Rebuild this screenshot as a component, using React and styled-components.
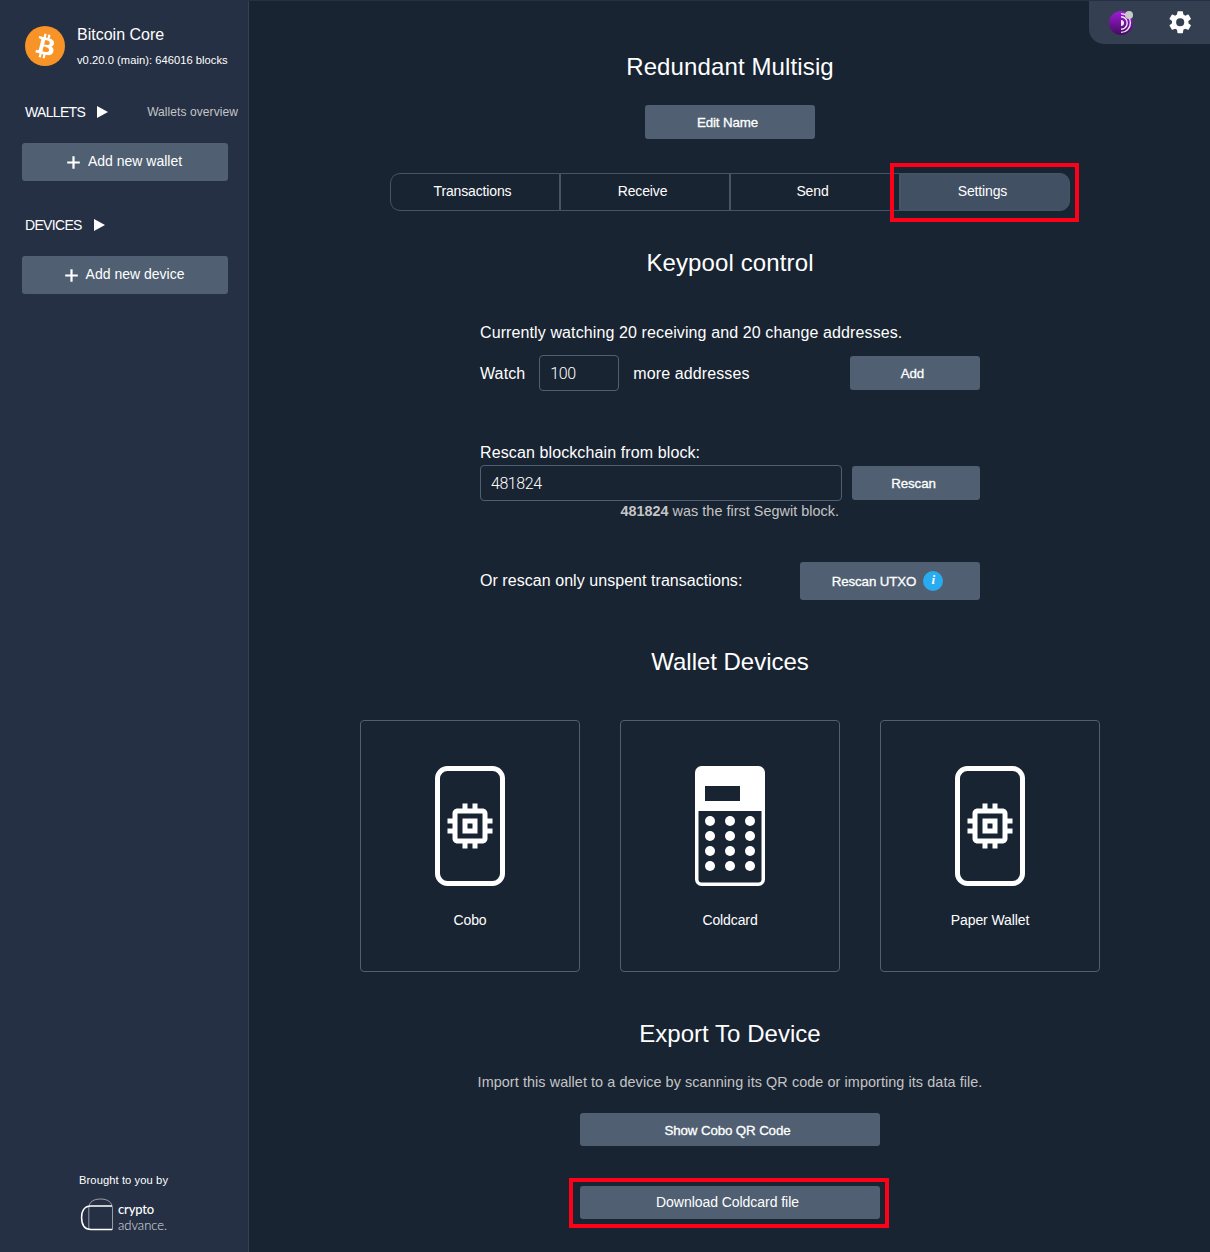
import React from "react";
import styled, { createGlobalStyle, css } from "styled-components";

const color = {
  page: "#192432",
  side: "#263044",
  button: "#506072",
  line: "#445567",
  active: "#425064",
  muted: "#c4c5c7",
  mark: "#ff0019",
};

const GlobalStyle = createGlobalStyle`
  *, *::before, *::after { box-sizing: border-box; }
  body {
    margin: 0;
    background: ${color.page};
    color: #fff;
    font-family: "Liberation Sans", Arial, sans-serif;
    font-size: 16px;
  }
  button, input { font-family: inherit; color: inherit; }
`;

const Layout = styled.div`
  position: relative;
  display: flex;
  height: 1252px;
  border-top: 1px solid ${color.side};
  overflow: hidden;
`;

const Sidebar = styled.aside`
  display: flex;
  flex-direction: column;
  flex: none;
  width: 249px;
  margin-right: 1px;
  padding: 25px 0 20px;
  background: ${color.side};
  border-right: 1px solid #344154;
`;

const NodeInfo = styled.div`
  display: flex;
  align-items: flex-start;
  gap: 12px;
  height: 60px;
  padding-left: 25px;
  svg { flex: none; }
`;

const NodeName = styled.div`
  line-height: 18px;
`;

const NodeStatus = styled.div`
  margin-top: 9px;
  font-size: 11.2px;
  line-height: 14px;
  letter-spacing: 0.03px;
  white-space: nowrap;
`;

const SectionHead = styled.div`
  display: flex;
  align-items: center;
  height: 20px;
  margin-top: ${(p) => p.$top}px;
  padding: 0 10px 0 25px;
  font-size: 14px;
  svg { margin: 0 0 1px 12px; }
`;

const SectionName = styled.span`
  letter-spacing: -0.67px;
`;

const OverviewLink = styled.a`
  margin-left: auto;
  color: ${color.muted};
  font-size: 12px;
  letter-spacing: 0.08px;
`;

const AddButton = styled.button`
  display: flex;
  align-items: center;
  justify-content: center;
  gap: 8px;
  width: 206px;
  height: 38px;
  margin: 21px 0 0 22px;
  padding: 0 1px 2px 0;
  border: 0;
  border-radius: 3px;
  background: ${color.button};
  font-size: 14px;
  svg { margin-top: 2px; }
`;

const Credits = styled.div`
  margin-top: auto;
  padding-left: 79px;
  font-size: 11.2px;
  line-height: 14px;
  letter-spacing: 0.08px;
`;

const Brand = styled.div`
  display: flex;
  align-items: center;
  gap: 4px;
  height: 34px;
  margin-top: 11px;
  padding-left: 1px;
`;

const BrandName = styled.div`
  display: flex;
  flex-direction: column;
  padding-top: 5px;
  font-family: Lato, sans-serif;
  font-size: 13px;
  line-height: 15.5px;
`;

const BrandLine = styled.span`
  font-weight: ${(p) => (p.$light ? 300 : 500)};
  letter-spacing: ${(p) => (p.$light ? "0px" : "-0.15px")};
  opacity: ${(p) => (p.$light ? 0.85 : 1)};
`;

const Toolbar = styled.div`
  position: absolute;
  top: 0;
  right: 0;
  display: flex;
  align-items: center;
  justify-content: space-between;
  width: 121px;
  height: 43px;
  padding: 0 17px 0 19px;
  border-bottom-left-radius: 15px;
  background: #343f51;
`;

const Main = styled.main`
  display: flex;
  flex: 1;
  flex-direction: column;
  align-items: center;
`;

const Heading = styled.h1`
  margin: ${(p) => p.$top}px 0 0;
  font-size: 24px;
  font-weight: 400;
  line-height: 30px;
  letter-spacing: ${(p) => p.$spacing ?? 0.12}px;
`;

const Button = styled.button`
  display: flex;
  align-items: center;
  justify-content: center;
  gap: 7px;
  flex: none;
  width: ${(p) => p.$width}px;
  height: ${(p) => p.$height || 34}px;
  padding: 0 5px 0 0;
  border: 0;
  border-radius: 3px;
  background: ${color.button};
  ${(p) =>
    p.$regular
      ? css`
          padding-bottom: 1px;
          font-size: 14px;
          letter-spacing: -0.05px;
        `
      : css`
          font-size: 13.33px;
          letter-spacing: -0.13px;
          -webkit-text-stroke: 0.3px #fff;
        `}
  ${(p) => p.$low && css`padding-top: 2px;`}
`;

const InfoBadge = styled.span`
  width: 20px;
  height: 20px;
  border-radius: 50%;
  background: #29abf0;
  font: italic bold 13px/18px "Liberation Serif", serif;
  text-align: center;
  -webkit-text-stroke: 0;
`;

const Tabs = styled.nav`
  display: flex;
  margin-top: 34px;
`;

const Tab = styled.a`
  position: relative;
  width: 170px;
  height: 38px;
  border: 1px solid ${color.line};
  background: ${(p) => (p.$active ? color.active : "transparent")};
  font-size: 14px;
  line-height: 35px;
  letter-spacing: -0.14px;
  text-align: center;
  padding-right: 5px;
  &:first-child { border-radius: 10px 0 0 10px; }
  &:last-child { border-radius: 0 10px 10px 0; }
`;

const Highlight = styled.span`
  position: absolute;
  inset: ${(p) => p.$inset};
  border: 4px solid ${color.mark};
  pointer-events: none;
`;

const Marked = styled.div`
  position: relative;
  margin-top: ${(p) => p.$top}px;
`;

const Form = styled.section`
  width: 500px;
  margin-top: 45px;
`;

const Label = styled.div`
  line-height: 20px;
  letter-spacing: ${(p) => p.$spacing ?? 0.11}px;
  white-space: nowrap;
`;

const Row = styled.div`
  display: flex;
  align-items: center;
  gap: ${(p) => p.$gap || 0}px;
  margin-top: ${(p) => p.$top}px;
  button { margin-left: auto; }
`;

const InlineLabel = styled(Label)`
  padding-top: 2px;
`;

const Input = styled.input`
  width: ${(p) => p.$width}px;
  height: 36px;
  padding: 0 10px;
  border: 1px solid ${color.button};
  border-radius: 4px;
  background: transparent;
  font-family: Roboto, sans-serif;
  font-size: 16px;
  font-weight: 300;
  letter-spacing: -0.45px;
  outline: none;
`;

const Field = styled.div`
  margin-top: 52px;
`;

const Hint = styled.div`
  padding-right: 141px;
  color: ${color.muted};
  font-size: 14.4px;
  line-height: 20px;
  letter-spacing: 0.03px;
  text-align: right;
`;

const Cards = styled.div`
  display: flex;
  gap: 40px;
  margin-top: 43px;
`;

const Card = styled.a`
  display: flex;
  flex-direction: column;
  align-items: center;
  gap: 24px;
  width: 220px;
  height: 252px;
  padding-top: 45px;
  border: 1px solid ${color.button};
  border-radius: 4px;
  font-size: 14px;
  line-height: 20px;
  letter-spacing: -0.1px;
`;

const Lead = styled.p`
  margin: 23px 0 21px;
  color: ${color.muted};
  font-size: 14.4px;
  line-height: 20px;
  letter-spacing: 0.08px;
`;

const BitcoinIcon = () => (
  <svg width="40" height="40" viewBox="0 0 32 32">
    <circle cx="16" cy="16" r="16" fill="#f79327" />
    <path
      fill="#fff"
      d="M23.189 14.02c.314-2.096-1.283-3.223-3.465-3.975l.708-2.84-1.728-.43-.69 2.765c-.454-.114-.92-.22-1.385-.326l.695-2.783L15.596 6l-.708 2.839c-.376-.086-.746-.17-1.104-.26l.002-.009-2.384-.595-.46 1.846s1.283.294 1.256.312c.7.175.826.638.805 1.006l-.806 3.235c.048.012.11.03.18.057l-.183-.045-1.13 4.532c-.086.212-.303.531-.793.41.018.025-1.256-.313-1.256-.313l-.858 1.978 2.25.561c.418.105.828.215 1.231.318l-.715 2.872 1.727.43.708-2.84c.472.127.93.245 1.378.357l-.706 2.828 1.728.43.715-2.866c2.948.558 5.164.333 6.097-2.333.752-2.146-.037-3.385-1.588-4.192 1.13-.26 1.98-1.003 2.207-2.538zm-3.95 5.538c-.533 2.147-4.148.986-5.32.695l.95-3.805c1.172.293 4.929.872 4.37 3.11zm.535-5.569c-.487 1.953-3.495.96-4.47.717l.86-3.45c.975.243 4.118.696 3.61 2.733z"
    />
  </svg>
);

const Arrow = () => (
  <svg width="11" height="12" viewBox="0 0 11 12">
    <path d="M0 0 11 6 0 12z" fill="#fff" />
  </svg>
);

const Plus = () => (
  <svg width="13" height="13" viewBox="0 0 13 13">
    <path d="M6.5 .2v12.6M.2 6.500h12.600" stroke="#fff" strokeWidth="2.200" />
  </svg>
);

const TorIcon = () => (
  <svg width="26" height="26" viewBox="0 0 26 26">
    <defs>
      <linearGradient id="onion" x1="0" y1="0" x2="0" y2="1">
        <stop offset="0" stopColor="#a01bd8" />
        <stop offset="1" stopColor="#420c5d" />
      </linearGradient>
    </defs>
    <circle cx="13" cy="13" r="12" fill="url(#onion)" />
    <g fill="none" stroke="#f2e4fa" strokeWidth="1.4">
      <path d="M13 3.6a9.4 9.4 0 0 1 0 18.8" />
      <path d="M13 6.8a6.2 6.2 0 0 1 0 12.4" />
    </g>
    <path d="M13 10a3 3 0 0 1 0 6z" fill="#f2e4fa" />
    <circle cx="21" cy="5" r="4" fill="#c9c9c9" />
  </svg>
);

const GearIcon = () => (
  <svg width="26.4" height="26.4" viewBox="0 0 24 24" fill="#fff">
    <path d="M19.43 12.98c.04-.32.07-.64.07-.98s-.03-.66-.07-.98l2.11-1.65c.19-.15.24-.42.12-.64l-2-3.46c-.12-.22-.39-.3-.61-.22l-2.49 1c-.52-.4-1.08-.73-1.69-.98l-.38-2.65C14.46 2.18 14.25 2 14 2h-4c-.25 0-.46.18-.49.42l-.38 2.65c-.61.25-1.17.59-1.69.98l-2.49-1c-.23-.09-.49 0-.61.22l-2 3.46c-.13.22-.07.49.12.64l2.11 1.65c-.04.32-.07.65-.07.98s.03.66.07.98l-2.11 1.65c-.19.15-.24.42-.12.64l2 3.46c.12.22.39.3.61.22l2.49-1c.52.4 1.08.73 1.69.98l.38 2.65c.03.24.24.42.49.42h4c.25 0 .46-.18.49-.42l.38-2.65c.61-.25 1.17-.59 1.69-.98l2.49 1c.23.09.49 0 .61-.22l2-3.46c.12-.22.07-.49-.12-.64l-2.11-1.65zM12 15.7a3.7 3.7 0 1 1 0-7.4 3.7 3.7 0 0 1 0 7.4z" />
  </svg>
);

const PhoneIcon = () => (
  <svg width="70" height="120" viewBox="0 0 70 120">
    <rect x="2.5" y="2.5" width="65" height="115" rx="10" fill="none" stroke="#fff" strokeWidth="5" />
    <path
      transform="translate(5 30) scale(2.5)"
      fill="#fff"
      d="M15 9H9v6h6V9zm-2 4h-2v-2h2v2zm8-2V9h-2V7c0-1.1-.9-2-2-2h-2V3h-2v2h-2V3H9v2H7c-1.1 0-2 .9-2 2v2H3v2h2v2H3v2h2v2c0 1.1.9 2 2 2h2v2h2v-2h2v2h2v-2h2c1.1 0 2-.9 2-2v-2h2v-2h-2v-2h2zm-4 6H7V7h10v10z"
    />
  </svg>
);

const CalculatorIcon = () => (
  <svg width="70" height="120" viewBox="0 0 70 120">
    <rect width="70" height="120" rx="6.5" fill="#fff" />
    <path d="M3.5 45h63v68.5a3 3 0 0 1-3 3h-57a3 3 0 0 1-3-3zM10 20h35v15H10z" fill={color.page} />
    {[55, 70, 85, 100].map((y) =>
      [15, 35, 55].map((x) => <circle key={`${x}-${y}`} cx={x} cy={y} r="5" fill="#fff" />)
    )}
  </svg>
);

const BrandIcon = () => (
  <svg width="34" height="34" viewBox="0 0 34 34" fill="none" stroke="#fff">
    <path d="M32 8H11C4.500 8 1.600 12.500 1.600 19.500S4.500 31.500 11 31.500H32" strokeWidth="1.500" />
    <path d="M32.500 32V11C32.500 4 27.500 1 20.500 1S8.800 4 8.800 10V31" strokeWidth="0.700" opacity="0.75" />
  </svg>
);

const devices = [
  { name: "Cobo", Icon: PhoneIcon },
  { name: "Coldcard", Icon: CalculatorIcon },
  { name: "Paper Wallet", Icon: PhoneIcon },
];

export default function App() {
  return (
    <>
      <GlobalStyle />
      <Layout>
        <Sidebar>
          <NodeInfo>
            <BitcoinIcon />
            <div>
              <NodeName>Bitcoin Core</NodeName>
              <NodeStatus>v0.20.0 (main): 646016 blocks</NodeStatus>
            </div>
          </NodeInfo>
          <SectionHead $top={16}>
            <SectionName>WALLETS</SectionName>
            <Arrow />
            <OverviewLink>Wallets overview</OverviewLink>
          </SectionHead>
          <AddButton>
            <Plus />
            Add new wallet
          </AddButton>
          <SectionHead $top={34}>
            <SectionName>DEVICES</SectionName>
            <Arrow />
          </SectionHead>
          <AddButton>
            <Plus />
            Add new device
          </AddButton>
          <Credits>
            Brought to you by
            <Brand>
              <BrandIcon />
              <BrandName>
                <BrandLine>crypto</BrandLine>
                <BrandLine $light>advance.</BrandLine>
              </BrandName>
            </Brand>
          </Credits>
        </Sidebar>

        <Main>
          <Heading $top={51}>Redundant Multisig</Heading>
          <Marked $top={23}>
            <Button $width={170}>Edit Name</Button>
          </Marked>
          <Tabs>
            <Tab>Transactions</Tab>
            <Tab>Receive</Tab>
            <Tab>Send</Tab>
            <Tab $active>
              Settings
              <Highlight $inset="-11px -10px -12px -11px" />
            </Tab>
          </Tabs>

          <Heading $top={37}>Keypool control</Heading>
          <Form>
            <Label>Currently watching 20 receiving and 20 change addresses.</Label>
            <Row $top={12} $gap={14}>
              <InlineLabel>Watch</InlineLabel>
              <Input $width={80} defaultValue="100" />
              <InlineLabel>more addresses</InlineLabel>
              <Button $width={130}>Add</Button>
            </Row>
            <Field>
              <Label>Rescan blockchain from block:</Label>
              <Row $top={2} $gap={10}>
                <Input $width={362} defaultValue="481824" />
                <Button $width={128}>Rescan</Button>
              </Row>
              <Hint>
                <b>481824</b> was the first Segwit block.
              </Hint>
            </Field>
            <Row $top={41}>
              <Label $spacing={0.05}>Or rescan only unspent transactions:</Label>
              <Button $width={180} $height={38}>
                Rescan UTXO <InfoBadge>i</InfoBadge>
              </Button>
            </Row>
          </Form>

          <Heading $top={47} $spacing={-0.03}>
            Wallet Devices
          </Heading>
          <Cards>
            {devices.map(({ name, Icon }) => (
              <Card key={name}>
                <Icon />
                {name}
              </Card>
            ))}
          </Cards>

          <Heading $top={47} $spacing={0.03}>
            Export To Device
          </Heading>
          <Lead>Import this wallet to a device by scanning its QR code or importing its data file.</Lead>
          <Button $width={300} $height={33} $low>
            Show Cobo QR Code
          </Button>
          <Marked $top={40}>
            <Button $width={300} $height={33} $regular>
              Download Coldcard file
            </Button>
            <Highlight $inset="-8px -9px -9px -11px" />
          </Marked>
        </Main>

        <Toolbar>
          <TorIcon />
          <GearIcon />
        </Toolbar>
      </Layout>
    </>
  );
}
